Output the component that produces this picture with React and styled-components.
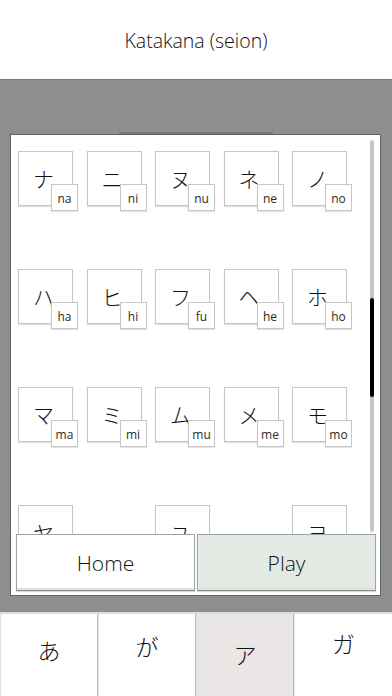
import React from 'react'
import styled, { createGlobalStyle } from 'styled-components'

const GlobalStyle = createGlobalStyle`
  html, body {
    margin: 0;
    padding: 0;
    background: #ffffff;
  }
  body {
    font-family: "Open Sans", "Noto Sans CJK JP", sans-serif;
    color: #222;
  }
`

const rows = [
  [['ナ', 'na'], ['ニ', 'ni'], ['ヌ', 'nu'], ['ネ', 'ne'], ['ノ', 'no']],
  [['ハ', 'ha'], ['ヒ', 'hi'], ['フ', 'fu'], ['ヘ', 'he'], ['ホ', 'ho']],
  [['マ', 'ma'], ['ミ', 'mi'], ['ム', 'mu'], ['メ', 'me'], ['モ', 'mo']],
  [['ヤ', 'ya'], null, ['ユ', 'yu'], null, ['ヨ', 'yo']],
]

const tabs = [
  { label: 'あ', shift: -5 },
  { label: 'が', shift: -9 },
  { label: 'ア', shift: -1, active: true },
  { label: 'ガ', shift: -12 },
]

const Page = styled.div`
  display: flex;
  flex-direction: column;
  width: 392px;
  height: 696px;
  overflow: hidden;
`
const Header = styled.header`
  align-items: center;
  display: flex;
  height: 79px;
  justify-content: center;
  font-size: 19.5px;
  font-weight: 300;
  color: #111;
  padding-top: 2px;
  box-sizing: border-box;
`
const Stage = styled.main`
  background: #8e8e8e;
  border-top: 1px solid #7b7b7b;
  box-sizing: border-box;
  height: 533px;
  padding: 54px 11px 0 10px;
`
const Panel = styled.section`
  background: #ffffff;
  border: 1px solid #626262;
  display: flex;
  flex-direction: column;
  height: 462px;
  box-sizing: border-box;
  position: relative;

  &::before {
    content: '';
    position: absolute;
    left: 108px;
    top: -3px;
    width: 154px;
    height: 2px;
    background: #777;
  }
`
const Scroll = styled.div`
  flex: 1;
  overflow: hidden;
  position: relative;
`
const Grid = styled.div`
  display: grid;
  grid-template-columns: repeat(5, 55px);
  column-gap: 13.5px;
  row-gap: 63px;
  padding: 16px 0 0 7px;
`
const Card = styled.div`
  box-sizing: border-box;
  width: 55px;
  height: 55px;
  border: 1px solid #c6c6c6;
  box-shadow: 0 1px 1px rgba(0, 0, 0, 0.12);
  position: relative;
  display: flex;
  align-items: center;
  justify-content: center;
  visibility: ${(props) => (props.$empty ? 'hidden' : 'visible')};
`
const Kana = styled.span`
  font-family: "Noto Sans CJK JP", sans-serif;
  font-weight: 300;
  font-size: 21px;
  line-height: 1;
  margin: 0 4px 1px 0;
  color: #111;
`
const Badge = styled.span`
  position: absolute;
  left: 32px;
  top: 32px;
  width: 27px;
  height: 27px;
  box-sizing: border-box;
  background: #ffffff;
  border: 1px solid #c6c6c6;
  box-shadow: 0 1px 1px rgba(0, 0, 0, 0.1);
  display: flex;
  align-items: center;
  justify-content: center;
  font-size: 12px;
  color: #2a2a2a;
  padding-top: 1px;
`
const Track = styled.div`
  position: absolute;
  right: 6px;
  top: 5px;
  width: 4px;
  height: 392px;
  border-radius: 2px;
  background: #c6c6c6;
`
const Thumb = styled.div`
  position: absolute;
  left: 0;
  top: 158px;
  width: 4px;
  height: 99px;
  border-radius: 2px;
  background: #000;
`
const Actions = styled.div`
  display: flex;
  gap: 2px;
  padding: 0 4px 4px 5px;
`
const ActionButton = styled.button`
  flex: 1;
  height: 57px;
  border: 1px solid #a2a2a2;
  border-bottom-color: #8a8a8a;
  box-shadow: 0 1px 1px rgba(0, 0, 0, 0.15), inset 0 -2px 0 #e2e2e2;
  background: ${(props) => (props.$primary ? '#e3e9e3' : '#ffffff')};
  font-family: "Open Sans", sans-serif;
  font-size: 21px;
  font-weight: 300;
  color: #111;
  padding: 0;
`
const TabBar = styled.nav`
  display: grid;
  grid-template-columns: 98px 98px 98px 98px;
  height: 84px;
  border-top: 2px solid #dcdcdc;
  box-sizing: border-box;
`
const Tab = styled.div`
  display: flex;
  align-items: center;
  justify-content: center;
  background: ${(props) => (props.$active ? '#ebe6e6' : '#ffffff')};
  border-right: 1px solid #b9b9b9;
  border-left: 1px solid #e4e4e4;
  font-family: "Noto Sans CJK JP", sans-serif;
  font-weight: 300;
  font-size: 23px;
  color: #111;

  span {
    transform: translateY(${(props) => props.$shift}px);
  }

  &:last-child {
    border-right: none;
  }
`

export default function App() {
  return (
    <Page>
      <GlobalStyle />
      <Header>Katakana (seion)</Header>
      <Stage>
        <Panel>
          <Scroll>
            <Grid>
              {rows.flat().map((item, i) =>
                item ? (
                  <Card key={i}>
                    <Kana>{item[0]}</Kana>
                    <Badge>{item[1]}</Badge>
                  </Card>
                ) : (
                  <Card key={i} $empty />
                )
              )}
            </Grid>
          </Scroll>
          <Track>
            <Thumb />
          </Track>
          <Actions>
            <ActionButton>Home</ActionButton>
            <ActionButton $primary>Play</ActionButton>
          </Actions>
        </Panel>
      </Stage>
      <TabBar>
        {tabs.map((t) => (
          <Tab key={t.label} $active={t.active} $shift={t.shift}>
            <span>{t.label}</span>
          </Tab>
        ))}
      </TabBar>
    </Page>
  )
}
